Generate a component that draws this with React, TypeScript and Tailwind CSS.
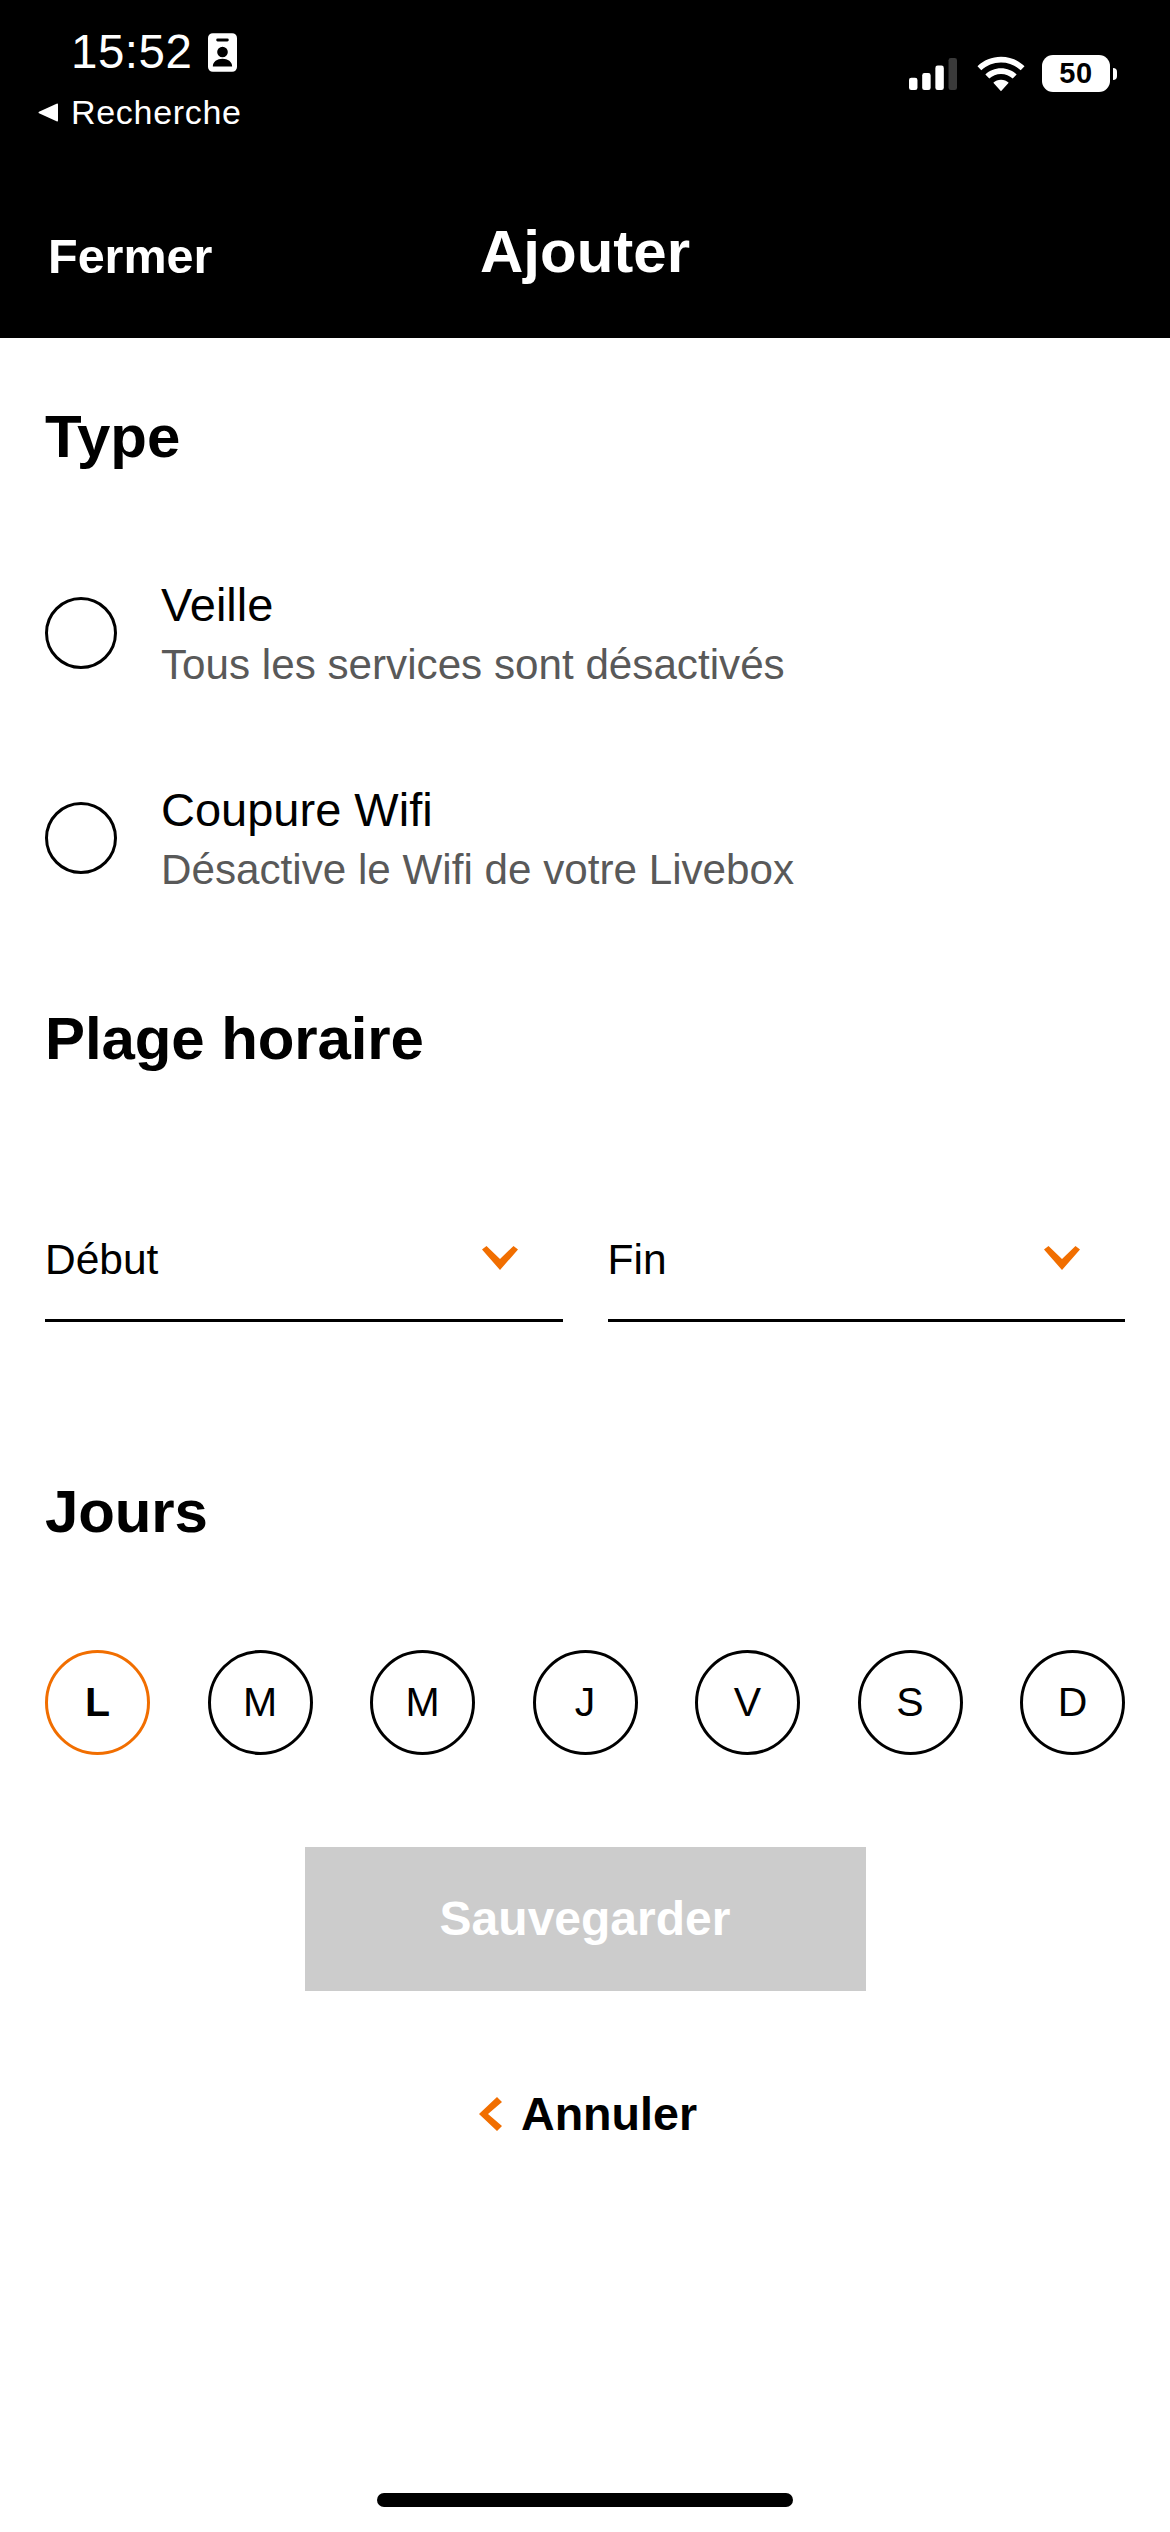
const ORANGE = '#f16e00';

function StatusBar() {
  return (
    <div className="flex items-start justify-between pl-[38px] pr-[53px] pt-[24px]">
      <div>
        <div className="flex items-center pl-[33px] h-[56px]">
          <span className="text-[47.500px] leading-[56px] font-medium tracking-[0.5px]">15:52</span>
          <svg className="ml-[16px]" width="29" height="39" viewBox="0 0 30 40">
            <path
              fill="#fff"
              fillRule="evenodd"
              d="M5 0h20a5 5 0 0 1 5 5v30a5 5 0 0 1-5 5H5a5 5 0 0 1-5-5V5a5 5 0 0 1 5-5zM10 5.500a1.500 1.500 0 0 0 0 3h10a1.500 1.500 0 0 0 0-3zM15 14a5.500 5.500 0 1 0 0 11 5.500 5.500 0 0 0 0-11zM5 34.500h20c0-5-4.500-8-10-8s-10 3-10 8z"
            />
          </svg>
        </div>
        <div className="flex items-center h-[40px] mt-[12px]">
          <svg width="21" height="19" viewBox="0 0 22 20">
            <path fill="#fff" d="M21 1.500v17a1 1 0 0 1-1.500.8L1 10.800a1 1 0 0 1 0-1.600L19.500.7A1 1 0 0 1 21 1.500z" />
          </svg>
          <span className="ml-[12px] text-[34px] leading-[40px] tracking-[0.7px]">Recherche</span>
        </div>
      </div>
      <div className="flex items-center mt-[31px]">
        <svg width="48" height="34" viewBox="0 0 51 34">
          <rect x="0" y="21" width="9" height="13" rx="2.500" fill="#fff" />
          <rect x="14" y="16" width="9" height="18" rx="2.500" fill="#fff" />
          <rect x="28" y="8" width="9" height="26" rx="2.500" fill="#fff" />
          <rect x="42" y="0" width="9" height="34" rx="2.500" fill="#3a3a3a" />
        </svg>
        <svg className="ml-[20px]" width="48" height="36" viewBox="0 0 50 36">
          <path
            fill="#fff"
            d="M25 0c9.500 0 18 3.700 24.500 9.800l-4 4.300C40 9 33 6 25 6S10 9 4.500 14.100l-4-4.300C7 3.700 15.500 0 25 0zM25 12c6.300 0 12 2.400 16.300 6.400l-4.100 4.300C34 19.800 29.700 18 25 18s-9 1.800-12.200 4.700l-4.100-4.300C13 14.400 18.700 12 25 12zM25 24c3.100 0 5.900 1.200 8 3.100L25 36l-8-8.900c2.100-1.900 4.900-3.100 8-3.100z"
          />
        </svg>
        <div className="ml-[17px] flex items-center">
          <div className="flex h-[37px] w-[68px] items-center justify-center rounded-[11px] bg-white text-[29px] font-bold tracking-[0.5px] text-black">
            50
          </div>
          <div className="ml-[3px] h-[12px] w-[4px] rounded-r-full bg-white" />
        </div>
      </div>
    </div>
  );
}

function SectionTitle({ children, className }: { children: string; className: string }) {
  return <h2 className={`text-[60px] leading-[68px] font-bold tracking-[-0.1px] text-black ${className}`}>{children}</h2>;
}

function RadioRow({ title, subtitle, className }: { title: string; subtitle: string; className: string }) {
  return (
    <div className={`flex items-center ${className}`}>
      <div className="h-[72px] w-[72px] shrink-0 rounded-full border-[3px] border-black" />
      <div className="ml-[44px]">
        <div className="text-[47px] leading-[56px] text-black">{title}</div>
        <div className="mt-[8px] text-[42.200px] leading-[48px] text-[#595959]">{subtitle}</div>
      </div>
    </div>
  );
}

function Select({ label }: { label: string }) {
  return (
    <div className="flex h-[88px] flex-1 items-start justify-between border-b-[3px] border-black">
      <span className="text-[42.500px] leading-[52px] text-black">{label}</span>
      <svg className="mt-[12px] mr-[45px]" width="36" height="24" viewBox="0 0 36 24">
        <path fill={ORANGE} d="M0 3.500 4.500 0 18 13 31.500 0 36 3.500 18 24z" />
      </svg>
    </div>
  );
}

const DAYS = ['L', 'M', 'M', 'J', 'V', 'S', 'D'];

export default function App() {
  return (
    <div className="flex min-h-[2532px] flex-col bg-white font-['Liberation_Sans',Arial,sans-serif]">
      <header className="h-[338px] bg-black text-white">
        <StatusBar />
        <div className="relative mt-[85px] flex items-center justify-center">
          <span className="absolute left-[48px] top-[9px] text-[48.500px] leading-[60px] font-bold">Fermer</span>
          <h1 className="text-[60px] leading-[70px] font-bold">Ajouter</h1>
        </div>
      </header>

      <main className="flex flex-1 flex-col px-[45px]">
        <SectionTitle className="mt-[65px]">Type</SectionTitle>
        <RadioRow className="mt-[106px]" title="Veille" subtitle="Tous les services sont désactivés" />
        <RadioRow className="mt-[93px]" title="Coupure Wifi" subtitle="Désactive le Wifi de votre Livebox" />
        <SectionTitle className="mt-[111px]">Plage horaire</SectionTitle>

        <div className="mt-[161px] flex gap-[45px]">
          <Select label="Début" />
          <Select label="Fin" />
        </div>

        <SectionTitle className="mt-[156px]">Jours</SectionTitle>

        <div className="mt-[104px] flex justify-between">
          {DAYS.map((day, i) => (
            <div
              key={i}
              className={
                i === 0
                  ? 'flex h-[105px] w-[105px] items-center justify-center rounded-full border-[3px] border-[#f16e00] text-[41px] font-bold text-black'
                  : 'flex h-[105px] w-[105px] items-center justify-center rounded-full border-[3px] border-black text-[41px] text-black'
              }
            >
              {day}
            </div>
          ))}
        </div>

        <div className="mt-[92px] flex justify-center">
          <button className="h-[144px] w-[561px] bg-[#cccccc] text-[48px] font-bold text-white">Sauvegarder</button>
        </div>

        <div className="mt-[93px] flex items-center justify-center pl-[6px]">
          <svg width="23" height="34" viewBox="0 0 23 34">
            <path fill={ORANGE} d="M0 17 18 0 23 5 9 17 23 29 18 34z" />
          </svg>
          <span className="ml-[19px] text-[46.600px] leading-[60px] font-bold text-black">Annuler</span>
        </div>

        <div className="mt-auto mb-[25px] flex justify-center">
          <div className="h-[14px] w-[416px] rounded-full bg-black" />
        </div>
      </main>
    </div>
  );
}
